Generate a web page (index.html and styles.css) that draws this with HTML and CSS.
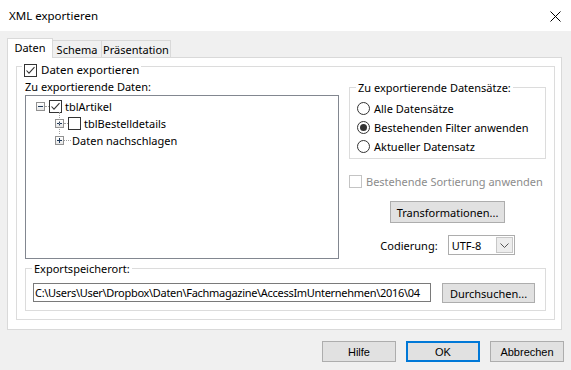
FILE: index.html
```html
<!DOCTYPE html>
<html lang="de">
<head>
  <meta charset="UTF-8">
  <title>XML exportieren</title>
  <link rel="stylesheet" href="styles.css">
</head>
<body>
  <header class="titlebar">
    <span class="title">XML exportieren</span>
    <svg class="close" viewBox="0 0 11 11"><path d="M0.5 0.5 L10.5 10.5 M10.5 0.5 L0.5 10.5" stroke="#000" stroke-width="1" fill="none"/></svg>
  </header>
  <div class="dialog">
    <div class="tabs">
      <span class="tab active tab-daten">Daten</span>
      <span class="tab tab-schema">Schema</span>
      <span class="tab tab-praes">Präsentation</span>
    </div>
    <div class="tabpanel">
      <div class="group main-group">
        <div class="group-title check-title">
          <span class="checkbox"><svg viewBox="0 0 11 11"><path d="M1.5 5.5 L4 8.2 L9.5 2.2" stroke="#333" stroke-width="1.1" fill="none"/></svg></span>
          <span>Daten exportieren</span>
        </div>
        <div class="columns">
          <div class="left-col">
            <div class="caption">Zu exportierende Daten:</div>
            <div class="tree">
              <div class="node root">
                <span class="expander"><svg viewBox="0 0 7 7"><path d="M1 3.5 H6" stroke="#1e395b" stroke-width="1"/></svg></span>
                <span class="dots"></span>
                <span class="checkbox"><svg viewBox="0 0 11 11"><path d="M1.5 5.5 L4 8.2 L9.5 2.2" stroke="#333" stroke-width="1.1" fill="none"/></svg></span>
                <span class="label">tblArtikel</span>
              </div>
              <div class="children">
                <div class="node">
                  <span class="expander"><svg viewBox="0 0 7 7"><path d="M1 3.5 H6 M3.5 1 V6" stroke="#1e395b" stroke-width="1"/></svg></span>
                  <span class="dots"></span>
                  <span class="checkbox"></span>
                  <span class="label">tblBestelldetails</span>
                </div>
                <div class="node">
                  <span class="expander"><svg viewBox="0 0 7 7"><path d="M1 3.5 H6 M3.5 1 V6" stroke="#1e395b" stroke-width="1"/></svg></span>
                  <span class="dots long"></span>
                  <span class="label">Daten nachschlagen</span>
                </div>
              </div>
            </div>
          </div>
          <div class="right-col">
            <div class="group records">
              <div class="group-title">Zu exportierende Datensätze:</div>
              <div class="option"><span class="radio"></span>Alle Datensätze</div>
              <div class="option"><span class="radio selected"></span>Bestehenden Filter anwenden</div>
              <div class="option"><span class="radio"></span>Aktueller Datensatz</div>
            </div>
            <div class="option disabled"><span class="checkbox"></span>Bestehende Sortierung anwenden</div>
            <button class="btn btn-transform">Transformationen...</button>
            <div class="encoding">
              <span>Codierung:</span>
              <div class="combo">
                <span>UTF-8</span>
                <span class="combo-arrow"><svg viewBox="0 0 9 5"><path d="M0.5 0.5 L4.5 4.5 L8.5 0.5" stroke="#555" stroke-width="1" fill="none"/></svg></span>
              </div>
            </div>
          </div>
        </div>
        <div class="group export">
          <div class="group-title">Exportspeicherort:</div>
          <div class="path-row">
            <div class="textbox">C:\Users\User\Dropbox\Daten\Fachmagazine\AccessImUnternehmen\2016\04</div>
            <button class="btn btn-browse">Durchsuchen...</button>
          </div>
        </div>
      </div>
    </div>
    <div class="footer">
      <button class="btn footer-btn">Hilfe</button>
      <button class="btn footer-btn default">OK</button>
      <button class="btn footer-btn">Abbrechen</button>
    </div>
  </div>
</body>
</html>
```

FILE: styles.css
```css
* { box-sizing: border-box; margin: 0; padding: 0; }
body { font: 11px "Noto Sans", sans-serif; color: #000; background: #f0f0f0; width: 571px; height: 370px; overflow: hidden; white-space: nowrap; }

.titlebar { height: 31px; background: #fff; display: flex; align-items: center; justify-content: space-between; padding: 0 10px 0 9px; }
.title { font-size: 11.5px; }
.close { width: 11px; height: 11px; margin-top: 1px; }

.dialog { padding: 7px 7px 0 7px; }
.tabs { display: flex; align-items: flex-end; height: 19px; }
.tab { height: 17px; border: 1px solid #d9d9d9; border-bottom: none; background: #f0f0f0; display: flex; align-items: center; justify-content: center; margin-left: -1px; }
.tab.active { height: 20px; margin-bottom: -1px; margin-left: 0; background: #fff; position: relative; z-index: 1; padding-bottom: 2px; }
.tab-daten { width: 46px; }
.tab-schema { width: 50px; }
.tab-praes { width: 70px; }

.tabpanel { width: 555px; height: 273px; border: 1px solid #d9d9d9; background: #fff; padding: 8px 6px 0 8px; }

.group { border: 1px solid #dcdcdc; }
.group-title { width: fit-content; background: #fff; height: 16px; line-height: 16px; margin: -8px 0 0 6px; padding: 0 2px; }
.main-group { height: 254px; }
.check-title { display: flex; align-items: center; gap: 4px; height: 14px; margin: -4px 0 0 5px; font-size: 11.5px; }

.checkbox { width: 13px; height: 13px; border: 1px solid #333; background: #fff; display: inline-flex; flex: none; }
.checkbox svg { width: 11px; height: 11px; }

.columns { display: flex; gap: 10px; margin-top: 2px; padding: 0 8px 0 8px; }
.left-col { width: 314px; }
.caption { height: 16px; line-height: 16px; }
.tree { height: 164px; border: 1px solid #828790; padding: 2px 0 0 10px; }
.node { display: flex; align-items: center; height: 17px; }
.node .checkbox { margin-right: 2px; }
.expander { width: 9px; height: 9px; border: 1px solid #919191; background: linear-gradient(#fff, #e6e6e6); display: inline-flex; flex: none; }
.expander svg { width: 7px; height: 7px; }
.dots { width: 4px; border-top: 1px dotted #a0a0a0; flex: none; }
.dots.long { width: 7px; }
.children { margin-left: 19px; position: relative; }
.children::before { content: ""; position: absolute; left: 4px; top: -3px; height: 22px; border-left: 1px dotted #a0a0a0; }
.label { padding-left: 1px; }

.right-col { width: 197px; display: flex; flex-direction: column; align-items: center; }
.records { width: 100%; height: 72px; margin-top: 8px; padding-bottom: 1px; }
.records .group-title { margin-bottom: 3px; }
.option { display: flex; align-items: center; height: 19px; padding-left: 7px; gap: 4px; }
.radio { width: 13px; height: 13px; border: 1px solid #333; border-radius: 50%; background: #fff; display: inline-flex; align-items: center; justify-content: center; flex: none; }
.radio.selected::after { content: ""; width: 7px; height: 7px; border-radius: 50%; background: #333; }
.option.disabled { align-self: stretch; padding-left: 0; height: 16px; margin-top: 14px; color: #8c8c8c; }
.option.disabled .checkbox { border-color: #c4c4c4; }

.btn { font: inherit; color: #000; background: #e1e1e1; border: 1px solid #adadad; }
.btn-transform { width: 115px; height: 22px; margin-top: 12px; }
.encoding { display: flex; align-items: center; gap: 10px; margin-top: 12px; }
.combo { width: 67px; height: 20px; border: 1px solid #adadad; background: #fff; display: flex; align-items: center; justify-content: space-between; padding: 1px 1px 1px 3px; }
.combo-arrow { width: 17px; height: 16px; border: 1px solid #c7c7c7; background: #ededed; display: flex; align-items: center; justify-content: center; }
.combo-arrow svg { width: 9px; height: 5px; }

.export { height: 43px; margin: 9px 8px 0 8px; }
.path-row { display: flex; gap: 11px; margin-top: 6px; padding-left: 7px; }
.textbox { width: 398px; height: 19px; border: 1px solid #7a7a7a; line-height: 17px; padding-left: 1px; overflow: hidden; letter-spacing: -0.3px; }
.btn-browse { width: 93px; height: 20px; }

.footer { display: flex; justify-content: flex-end; gap: 10px; margin-top: 11px; }
.footer-btn { width: 74px; height: 21px; font: 11px "Liberation Sans", sans-serif; }
.footer-btn.default { border: 2px solid #0078d7; }
```
